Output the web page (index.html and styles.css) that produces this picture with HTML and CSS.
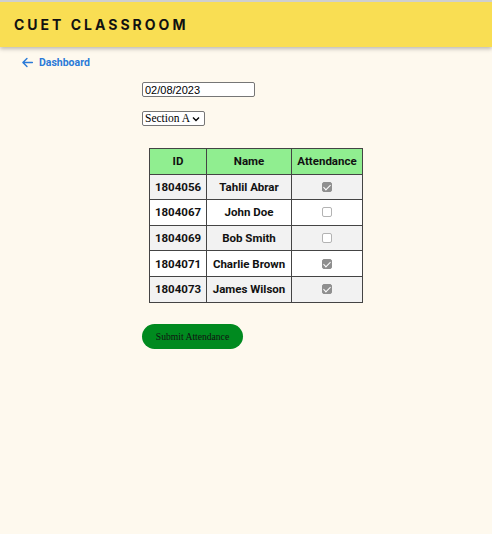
FILE: index.html
```html
<!DOCTYPE html>
<html>
<head>
<meta charset="utf-8">
<link rel="stylesheet" href="styles.css">
</head>
<body>
<header class="topbar">
  <h1 class="brand">CUET CLASSROOM</h1>
</header>
<main class="page">
  <a class="back" href="#">
    <svg class="back-icon" width="13" height="13" viewBox="0 0 24 24"><path d="M21 12H4M11 4.5L3.5 12l7.5 7.5" fill="none" stroke="currentColor" stroke-width="2.6" stroke-linecap="round" stroke-linejoin="round"/></svg>
    <span>Dashboard</span>
  </a>
  <section class="form">
    <input class="date" type="text" value="02/08/2023">
    <select class="section">
      <option>Section A</option>
    </select>
    <table class="roster">
      <colgroup><col class="c-id"><col class="c-name"><col class="c-att"></colgroup>
      <thead>
        <tr><th>ID</th><th>Name</th><th>Attendance</th></tr>
      </thead>
      <tbody>
        <tr><td>1804056</td><td>Tahlil Abrar</td><td><input class="chk" type="checkbox" checked disabled></td></tr>
        <tr><td>1804067</td><td>John Doe</td><td><input class="chk" type="checkbox" disabled></td></tr>
        <tr><td>1804069</td><td>Bob Smith</td><td><input class="chk" type="checkbox" disabled></td></tr>
        <tr><td>1804071</td><td>Charlie Brown</td><td><input class="chk" type="checkbox" checked disabled></td></tr>
        <tr><td>1804073</td><td>James Wilson</td><td><input class="chk" type="checkbox" checked disabled></td></tr>
      </tbody>
    </table>
    <button class="submit" type="button">Submit Attendance</button>
  </section>
</main>
</body>
</html>
```
FILE: styles.css
```css
html, body {
  margin: 0;
  padding: 0;
  background: #fef9ee;
  height: 100%;
}
body {
  border-top: 2px solid #cfcfcf;
  box-sizing: border-box;
}
.topbar {
  background: #f9de53;
  height: 45px;
  display: flex;
  align-items: center;
  padding-left: 14px;
  box-shadow: 0 2px 4px rgba(0,0,0,0.25);
}
.brand {
  margin: 0;
  font-family: "Inter", sans-serif;
  font-weight: 700;
  font-size: 14px;
  letter-spacing: 3px;
  color: #111;
}
.page {
  display: flex;
  flex-direction: column;
}
.back {
  display: flex;
  align-items: center;
  gap: 5px;
  margin: 8px 0 0 21px;
  height: 14px;
  text-decoration: none;
  color: #2a7ad8;
  font-family: "Roboto", sans-serif;
  font-weight: 700;
  font-size: 10.5px;
  align-self: flex-start;
}
.back-icon { display: block; }
.form {
  margin-left: 142px;
  margin-top: 13px;
  display: flex;
  flex-direction: column;
  align-items: flex-start;
}
.date {
  width: 113px;
  height: 15px;
  box-sizing: border-box;
  font-family: "Liberation Sans", Arial, sans-serif;
  font-size: 11px;
  padding: 0 2px;
  border: 1px solid #767676;
  border-radius: 2px;
  background: #fff;
  margin: 0;
  color: #000;
}
.section {
  -webkit-appearance: none;
  appearance: none;
  margin-top: 14px;
  height: 15px;
  width: 63px;
  box-sizing: border-box;
  font-family: "Liberation Serif", serif;
  font-size: 11.5px;
  line-height: 13px;
  padding: 0 0 0 2px;
  background: #fff url("data:image/svg+xml,%3Csvg xmlns='http://www.w3.org/2000/svg' width='8' height='6' viewBox='0 0 8 6'%3E%3Cpath d='M1 1.5l3 3 3-3' fill='none' stroke='%23000' stroke-width='1.4'/%3E%3C/svg%3E") no-repeat right 4px center;
  border: 1px solid #767676;
  border-radius: 2px;
  color: #000;
}
.roster {
  margin-top: 22px;
  margin-left: 7px;
  border-collapse: collapse;
  table-layout: fixed;
  width: 213px;
  font-family: "Roboto", sans-serif;
  font-weight: 700;
  font-size: 11.5px;
  color: #111;
  border: 1px solid #333;
}
.c-id { width: 57px; }
.c-name { width: 85px; }
.c-att { width: 71px; }
.roster th, .roster td {
  border: 1px solid #444;
  height: 24.6px;
  padding: 0;
  text-align: center;
  white-space: nowrap;
}
.roster th {
  background: #90ee90;
  font-weight: 700;
}
.roster tbody tr:nth-child(odd) td { background: #f2f2f2; }
.roster tbody tr:nth-child(even) td { background: #fff; }
.chk {
  -webkit-appearance: none;
  appearance: none;
  width: 10px;
  height: 10px;
  margin: 0;
  vertical-align: middle;
  border: 1px solid #b3b3b3;
  border-radius: 2px;
  background: #fff;
  box-sizing: border-box;
  position: relative;
  top: -1px;
}
.chk:checked {
  background: #8f8f8f;
  border-color: #8f8f8f;
}
.chk:checked::after {
  content: "";
  position: absolute;
  left: 2px;
  top: 0px;
  width: 3px;
  height: 6px;
  border: solid #fff;
  border-width: 0 1.5px 1.5px 0;
  transform: rotate(45deg);
}
.submit {
  margin-top: 21px;
  width: 101px;
  height: 25px;
  border: none;
  border-radius: 13px;
  background: #008a1f;
  color: #111;
  font-family: "Liberation Serif", serif;
  font-size: 9.6px;
  padding: 0;
}
```
